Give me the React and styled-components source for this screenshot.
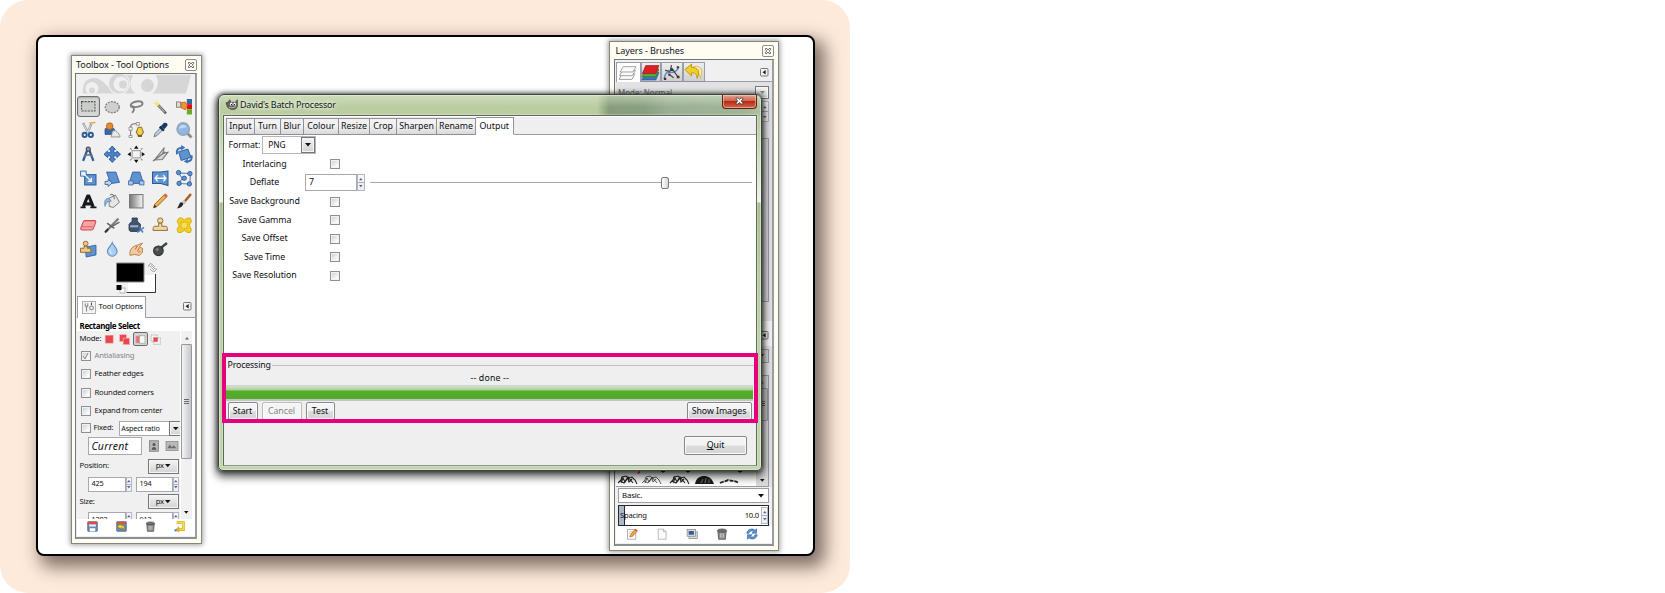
import React from "react";
import styled, { createGlobalStyle, css } from "styled-components";

const GlobalStyle = createGlobalStyle`
  *, *::before, *::after { box-sizing: border-box; }
  html, body { margin: 0; background: #fff; }
  body { font-family: "Noto Sans", "Open Sans", sans-serif; font-size: 8.8px; line-height: 1; color: #0c0c14; overflow: hidden; }
  svg { display: block; flex: none; overflow: visible; }
`;

const Page = styled.main`
  width: 850px; height: 593px; padding: 35px 0 0 36px;
  border-radius: 28px; background: #fdeadb;
`;
const Desktop = styled.section`
  position: relative; width: 779px; height: 521px;
  border: 2px solid #000; border-radius: 8px; background: #fff;
  box-shadow: 7px 8px 17px 3px rgba(45, 30, 25, 0.6);
`;

const Win = styled.section`
  position: absolute; left: ${p => p.$x}px; top: ${p => p.$y}px;
  width: ${p => p.$w}px; height: ${p => p.$h}px;
  display: flex; flex-direction: column;
`;
const Dock = styled(Win)`
  border: 1px solid #85857f; background: #fffdf2; padding: 0 4px 4px ${p => p.$inset ?? 4}px;
  box-shadow: 0 0 5px 1px rgba(0, 0, 0, 0.38);
`;
const DockTitle = styled.header`
  height: 17px; flex: none; padding: 0 0 0 1.5px;
  display: flex; align-items: center; justify-content: space-between;
  font-size: 9.1px; color: #14142a; letter-spacing: -0.1px;
`;
const CloseBox = styled.span`
  width: 12px; height: 12px; display: grid; place-items: center;
  border: 1px solid #8c8c88; border-radius: 2px; background: #fffef8;
`;
const DockBody = styled.div`
  flex: 1; min-height: 0; display: flex; flex-direction: column; overflow: hidden;
  border: 1px solid #70747c; border-right: 2px solid #9a9da4; border-bottom: 2px solid #8b8e94;
  background: #f0f0f0; padding: 0 0 1px 1px;
`;
const ToolGrid = styled.div`
  display: grid; grid-template-columns: repeat(5, 24px); grid-auto-rows: 23.7px; flex: none;
`;
const ToolCell = styled.span`
  display: grid; place-items: center;
  ${p => p.$on && css`
    margin: 1px 0.5px 1.5px 0.5px; border: 1.5px solid #6f6f6f; border-radius: 3px;
    background: #d6d6d6; box-shadow: inset 0 1px 2px #a8a8a8;
  `}
`;
const Swatches = styled.div`height: 35px; flex: none; padding: 0.5px 0 0 37px;`;
const TabStrip = styled.div`
  height: ${p => p.$h}px; flex: none; display: flex; align-items: stretch;
`;
const DockTab = styled.div`
  width: ${p => p.$w}px; flex: none; display: flex; align-items: center; gap: 3px; padding-left: ${p => p.$pad ?? 5}px;
  border: 1px solid #9a9da8; border-bottom: ${p => (p.$on ? "0" : "1px solid #8f929c")};
  background: ${p => (p.$on ? "#fff" : "linear-gradient(#ededed, #cfcfcf)")};
  white-space: nowrap; font-size: 7.8px; letter-spacing: -0.15px;
`;
const TabIcon = styled.span`
  width: 14px; height: 13px; display: grid; place-items: center; border: 1px solid #b0b0b0; background: #f3f3f3;
`;
const TabFill = styled.div`
  flex: 1; display: flex; justify-content: flex-end; align-items: center; padding-right: ${p => p.$pr}px;
  border-bottom: 1px solid #9a9da8; background: ${p => p.$bg || "transparent"};
`;
const Strip = styled.div`
  height: ${p => p.$h}px; flex: none; display: flex; align-items: center; padding: 2px 0 0 3px;
  background: #fff; font-weight: 700; font-size: 8px; letter-spacing: -0.35px; color: #000; white-space: nowrap;
`;
const Options = styled.div`height: 188px; flex: none; display: flex; background: #fff;`;
const OptionList = styled.div`
  width: 103px; height: 188px; overflow: hidden; background: #f0f0f0; padding-left: 3px;
  font-size: 7.7px; color: #141418; letter-spacing: -0.2px;
`;
const Line = styled.div`
  height: ${p => p.$h}px; display: flex; align-items: center; white-space: nowrap;
  gap: ${p => p.$gap || 0}px; padding-left: ${p => p.$pl || 0}px;
  color: ${p => (p.$off ? "#85858a" : "inherit")};
`;
const Grow = styled.span`flex: 1;`;
const Check = styled.span`
  width: 10px; height: 10px; flex: none; display: grid; place-items: center;
  border: 1px solid #8e9094; background: linear-gradient(135deg, #c6c8cc, #fff 80%);
  box-shadow: inset 0 0 0 1px #f2f2f2;
`;
const ModeButton = styled.span`
  width: 15.5px; height: 14px; display: grid; place-items: center; border-radius: 2px;
  border: 1px solid ${p => (p.$on ? "#6b6b6b" : "transparent")}; background: ${p => (p.$on ? "#d4d4d4" : "transparent")};
`;
const Field = styled.span`
  width: ${p => p.$w}px; height: ${p => p.$h}px; flex: none; display: flex; align-items: center; padding-left: ${p => p.$pl ?? 3}px;
  border: 1px solid #a7a9b0; background: #fff; white-space: nowrap;
  font-size: ${p => p.$fs || 7.3}px; font-style: ${p => (p.$italic ? "italic" : "normal")}; color: #111;
  letter-spacing: ${p => (p.$italic ? 0.2 : -0.2)}px;
`;
const SmallButton = styled.span`
  width: ${p => p.$w}px; height: ${p => p.$h}px; flex: none; display: flex; align-items: center; justify-content: center; gap: 1px;
  border: 1px solid #74767a; background: linear-gradient(#f4f4f4, #d2d2d2); box-shadow: inset 0 0 0 1px #f6f6f6;
`;
const SpinBox = styled.span`
  width: ${p => p.$w || 6}px; height: ${p => p.$h}px; flex: none; display: flex; flex-direction: column; justify-content: space-around; align-items: center;
  border: 1px solid #b5b7be; background: linear-gradient(#f7f7fa 46%, #a9abb2 47%, #a9abb2 53%, #f0f0f4 54%);
`;
const Scroll = styled.div`
  width: 11px; margin-left: 1.5px; height: 188px; display: flex; flex-direction: column; align-items: center; background: #f1f1f1;
`;
const Thumb = styled.span`
  width: 11px; height: ${p => p.$h}px; display: grid; place-items: center; border: 1px solid #96989d; border-radius: 1px;
  background: linear-gradient(90deg, #f5f5f5, #c5c6c9);
`;
const IconBar = styled.div`
  flex: 1; display: flex; align-items: center; justify-content: space-between; padding: 0 ${p => p.$p}px ${p => p.$pb ?? 4}px ${p => p.$pl}px; background: #fff;
`;

/* Batch processor dialog */
const DialogFrame = styled(Win)`
  border: 1.5px solid #3c4438; border-radius: 6px 6px 5px 5px; padding: 0 4px 4px 4px;
  background:
    linear-gradient(rgba(225, 235, 210, 0.55), transparent 12px) 0 0 / 100% 21px no-repeat,
    linear-gradient(90deg, transparent 378px, rgba(120, 140, 110, 0.75) 390px, rgba(118, 145, 118, 0.75) 425px, rgba(145, 165, 145, 0.75) 450px, rgba(140, 165, 145, 0.6) 525px, rgba(150, 175, 150, 0.3)) 0 0 / 100% 21px no-repeat,
    linear-gradient(#b9cc9f 0, #bccfa4 32px, #edf3e7 107px, #a9be8b 108px, #b9cfa4 200px, #c1d5ac 100%);
  box-shadow: 0 4px 9px 2px rgba(0, 0, 0, 0.62), 0 0 4px 1px rgba(0, 0, 0, 0.55), inset 0 0 0 1px rgba(255, 255, 255, 0.4);
`;
const DialogTitle = styled.header`
  height: 20px; flex: none; display: flex; padding: 0 0 0 2.5px; justify-content: space-between;
`;
const Caption = styled.span`
  display: flex; align-items: center; gap: 2.5px; font-size: 9px; letter-spacing: -0.2px; color: #101a14; white-space: nowrap;
  text-shadow: 0 0 5px #fff, 0 0 5px #fff;
`;
const RedClose = styled.span`
  width: 35px; height: 14px; display: grid; place-items: center; border: 1px solid #5b2019; border-top: 0; border-radius: 0 0 4px 4px;
  background: linear-gradient(#e5a394, #cf6550 45%, #b62c12 50%, #d6654a); box-shadow: inset 0 0 0 1px rgba(255, 220, 210, 0.5);
`;
const DialogBody = styled.div`
  flex: 1; min-height: 0; display: flex; flex-direction: column; background: #efefef; letter-spacing: -0.07px;
  border: 1px solid #5f685c; border-bottom-color: #8a9186; outline: 1px solid rgba(255, 255, 255, 0.25);
`;
const Tabs = styled.nav`
  height: 19px; flex: none; display: flex; align-items: flex-end; padding-left: 2px; border-top: 1px solid #fff;
`;
const Tab = styled.span`
  width: ${p => p.$w}px; height: ${p => (p.$on ? 18 : 17)}px; flex: none; display: flex; align-items: center; justify-content: center;
  border: 1px solid #8e9199; border-left-width: ${p => (p.$first ? 1 : 0)}px; border-bottom-color: ${p => (p.$on ? "#fff" : "#8e9199")};
  background: ${p => (p.$on ? "#fff" : "linear-gradient(#f1f1f1 45%, #d9d9d9)")}; white-space: nowrap; letter-spacing: 0; padding-top: 1px;
`;
const TabRest = styled.span`flex: 1; height: 18px; border-bottom: 1px solid #9a9ca2;`;
const Pane = styled.div`height: 218px; flex: none; background: #fff; padding: 0.6px 2px 0 3px;`;
const FormRow = styled.div`
  height: ${p => p.$h}px; display: flex; align-items: center; white-space: nowrap;
`;
const FormLabel = styled.span`width: 75px; text-align: center; flex: none; margin-right: 1px;`;
const CheckHolder = styled.span`padding-left: 27px;`;
const Combo = styled.span`
  width: 53.5px; height: 18px; display: flex; justify-content: space-between; align-items: stretch; border: 1px solid #b4b6bc; background: #fff;
  margin-left: 2px; & > span:first-child { padding: 4px 0 0 5px; font-size: 8.4px; }
`;
const Slider = styled.span`
  flex: 1; height: 12px; margin: 0 2px 0 5px; display: flex; align-items: center;
  &::before { content: ""; height: 1px; width: 290.5px; background: #a8a8a8; }
  &::after { content: ""; height: 1px; flex: 1; background: #a8a8a8; }
`;
const SliderThumb = styled.span`
  width: 8px; height: 12px; border: 1px solid #777a7e; border-radius: 2px; background: linear-gradient(90deg, #fff, #d5d5d5);
`;
const Processing = styled.section`
  height: 70px; flex: none; margin: 0 -2px 0 -2px; border: 4px solid #e5007d; position: relative; background: #efefef;
  display: flex; flex-direction: column;
`;
const Legend = styled.div`
  height: 16px; flex: none; display: flex; align-items: center; padding: 1px 0 0 1.5px; gap: 1px; letter-spacing: -0.15px;
  &::after { content: ""; flex: 1; height: 1px; background: #bfc0c2; }
`;
const Status = styled.div`height: 12.5px; flex: none; display: grid; place-items: center; letter-spacing: 0.15px;`;
const Progress = styled.div`
  height: 16px; flex: none; border-top: 1px solid #d3d2d4; border-bottom: 2px solid #c5c2c8; margin-right: 1px;
  background: linear-gradient(#cfe3c8 0, #a9cf9c 4px, #54ab2a 5px, #52aa28 100%);
`;
const Buttons = styled.div`display: flex; gap: 4px; padding: 1px 2px 0 1.5px; height: 17.5px; flex: none; overflow: hidden;`;
const Button = styled.button`
  width: ${p => p.$w}px; height: ${p => p.$h || 18}px; padding: 0; font: inherit; color: inherit; white-space: nowrap; letter-spacing: inherit;
  border: 1px solid #85878b; border-radius: 2px; background: linear-gradient(#f4f4f4 45%, #dcdcdc 55%, #d4d4d4);
  box-shadow: inset 0 0 0 1px #fafafa;
  &:disabled { color: #858588; border-color: #b9babd; background: #f4f4f4; }
`;
const Footer = styled.footer`flex: 1; display: flex; justify-content: flex-end; padding: 13.5px 8.5px 0 0;`;

/* Layers dock */
const Zone = styled.div`
  height: ${p => p.$h}px; flex: none; display: flex; justify-content: ${p => p.$j || "flex-end"}; align-items: flex-start;
  padding: ${p => p.$p || "0"}; background: ${p => p.$bg || "#e2e2e4"}; overflow: hidden; white-space: nowrap;
`;
const ModeText = styled.span`font-size: 8px; color: #66666a;`;
const Bordered = styled.div`
  width: ${p => p.$w}px; height: ${p => p.$h}px; flex: none; border: 1px solid #9b9ca2; background: ${p => p.$bg || "#d8d8da"};
  display: flex; justify-content: ${p => p.$j || "flex-end"}; align-items: ${p => p.$a || "flex-start"};
`;
const BrushScroll = styled.div`
  width: 12px; height: 110px; display: flex; flex-direction: column; align-items: center; padding-top: 5px; gap: 4px; background: #dadadc;
`;
const BrushArea = styled.div`flex: 1; height: 110px; display: flex; align-items: flex-end; background: #fff;`;
const Basic = styled.div`
  height: 15px; flex: none; margin: 1px 3px 2px 2px; padding: 0 4px 0 3px; display: flex; align-items: center; justify-content: space-between;
  border: 1px solid #9b9ca2; background: #fff; font-size: 7.8px; letter-spacing: -0.15px;
`;
const Spacing = styled.div`
  height: 20.5px; flex: none; margin: 0 3px 0 2px; display: flex; align-items: center; justify-content: space-between; border: 1.5px solid #24282c;
  background: linear-gradient(90deg, #a9bac6 5px, #24282c 5px, #24282c 6px, #fff 6px); font-size: 7.6px; padding-left: 1px; letter-spacing: -0.2px;
  & > span:last-child { display: flex; align-items: center; gap: 2px; }
`;

const Tri = ({ up, left, s = 6, c = "#111" }) => (
  <svg width={s} height={s * 0.6} viewBox="0 0 10 6">
    <path d={left ? "M7-2v10L1 3z" : up ? "M0 6h10L5 0z" : "M0 0h10L5 6z"} fill={c} />
  </svg>
);
const Spin = ({ h, w, c = "#4f62a5" }) => (
  <SpinBox $h={h} $w={w}><Tri up s={3.6} c={c} /><Tri s={3.6} c={c} /></SpinBox>
);
const CloseGlyph = () => (
  <CloseBox>
    <svg width="6" height="6" viewBox="0 0 6 6"><path d="M.5.5h1.3L3 2 4.2.5h1.3v1.2L4.2 3l1.3 1.3v1.2H4.2L3 4 1.8 5.5H.5V4.3L1.8 3 .5 1.7z" fill="#fff" stroke="#444" strokeWidth=".8" /></svg>
  </CloseBox>
);
const MenuGlyph = () => (
  <svg width="8" height="8" viewBox="0 0 8 8"><rect x=".5" y=".5" width="7.5" height="7.5" rx="1" fill="#f4f4f4" stroke="#777" /><path d="M5.7 2v4.4L2.4 4.2z" fill="#222" /></svg>
);
const Grip = () => (
  <svg width="5" height="6" viewBox="0 0 5 6"><path d="M0 .5h5M0 2.5h5M0 4.5h5" stroke="#67696d" /></svg>
);

const B = "#5f93cf", D = "#2b5a9b";
const icons = {
  rect: <rect x="1.5" y="3.5" width="13" height="9" fill="#c9ccc9" stroke="#555" strokeDasharray="2 1" />,
  ellipse: <ellipse cx="8" cy="8" rx="6.8" ry="5.4" fill="#cdd0cd" stroke="#777" strokeWidth="1.1" strokeDasharray="2 1" />,
  lasso: <g fill="none" stroke="#7d807d" strokeWidth="1.8"><path d="M3.500 8C.5 5 6 2.200 10 2.200c5 0 5.500 3.500 1 5-3 1-7 1-6.500-1" /><path d="M3.500 7.500c3 1 3 3 .5 6" /></g>,
  wand: <g><path d="M6 6l7.500 8" stroke="#555" strokeWidth="2.400" /><path d="M6 6l6.500 7" stroke="#b9b9a8" strokeWidth="1" /><path d="M4.500 1l1 2.500L8 4.500l-2.500 1-1 2.500-1-2.500L1 4.500l2.500-1z" fill="#f6e96a" /></g>,
  bycolor: <g><path d="M10.500 0h5v5h-5z" fill="#3465a4" /><path d="M10.500 5h5v5h-5z" fill="#d11" /><path d="M10.500 10h5v5h-5z" fill="#63b022" /><path d="M.5 3h4v5h-4z" fill="#ddd" stroke="#888" /><path d="M5 3.500l4-.5 2 3-2 4.500-4-2z" fill="#f0913a" stroke="#c9620f" strokeWidth=".8" /></g>,
  scissors: <g fill="none"><path d="M3 1l4.500 9M11 2L7.500 10" stroke="#999c99" strokeWidth="2.200" /><path d="M3.500 2l4 8 3-7" stroke="#ececec" strokeWidth=".8" /><path d="M9 1c2 0 4-.5 6-.5" stroke="#e2a45c" strokeWidth="1.300" /><circle cx="4.500" cy="12.500" r="2" stroke={D} strokeWidth="1.900" /><circle cx="10.500" cy="12.500" r="2" stroke={D} strokeWidth="1.900" /></g>,
  fgselect: <g><path d="M1 12V7c0-2 9-2 9 0v5z" fill="#3568ad" stroke="#26436f" strokeWidth=".7" /><circle cx="5.500" cy="4" r="3.200" fill="#e88b2e" stroke="#a85a15" strokeWidth=".7" /><path d="M7 14.500l1-5c2-2.500 5-1 7.500 4v1z" fill="#e7e7e7" stroke="#888" strokeWidth=".8" /></g>,
  paths: <g fill="none"><path d="M2.500 14V5c0-3 2-3.500 7-3.500" stroke="#777" /><path d="M1 13h3v2H1zM1 5h3v3H1zM8 .5h3v2.500H8z" fill="#fff" stroke="#777" strokeWidth=".7" /><path d="M10 5h3l2 5-2 3h-3l-2-3z" fill="#f1d04a" stroke="#95711b" /><path d="M9.500 13.500h4" stroke="#6d5b20" strokeWidth="2" /></g>,
  picker: <g><path d="M2 14.500l1-3.500 6-6 2 2-6 6z" fill="#b9d2ec" stroke="#667" strokeWidth=".8" /><path d="M8.500 4l3-3c2-1 4 .5 3.500 2.500l-3 3.500z" fill="#173967" /><path d="M7.500 4.500l4 4" stroke="#14294a" strokeWidth="2.200" /></g>,
  zoom: <g><path d="M11 11l4 4" stroke="#8c8f8c" strokeWidth="2.800" /><circle cx="7" cy="6.800" r="6" fill="#8fb6e5" stroke="#98a3b0" strokeWidth="1.400" /><path d="M3 6.500a4 4 0 017.500-1.500z" fill="#c3daf5" /></g>,
  measure: <g fill="none"><path d="M7 4L3 14.500M9 4l4 10.500" stroke={D} strokeWidth="2.200" /><path d="M4 10c2-2 6-2 8 0" stroke="#777" strokeWidth="1.700" /><circle cx="8" cy="3" r="2" fill="#999" stroke="#445" /></g>,
  move: <path d="M8 0l3.200 3.500H9.500v3h3V4.800L16 8l-3.500 3.200V9.500h-3v3h1.700L8 16l-3.200-3.500h1.700v-3h-3v1.700L0 8l3.500-3.200v1.700h3v-3H4.800z" fill="#4c84c9" stroke={D} strokeWidth=".9" />,
  align: <g><rect x="4" y="4.500" width="8" height="7" fill="#f4f4f4" stroke="#999" /><path d="M8-.5l2.200 3.200H5.800zM8 16.500l2.200-3.200H5.800zM-.5 8l3.200-2.200v4.400zM16.500 8l-3.200-2.200v4.400z" fill="#111" /><path d="M2 2l1.500 1.500M14 2l-1.500 1.500M2 14l1.500-1.500M14 14l-1.500-1.500" stroke="#888" /></g>,
  crop: <g><path d="M2.500 13.500L12 1.500l-1.500 5.500 5-1-5.500 7z" fill="#d9dbd9" stroke="#777" /><path d="M1 14.500l12-9" stroke="#777" strokeWidth="1.300" /></g>,
  rotate: <g><path d="M2.500 5.500l9-2.500 3 8-9.500 3z" fill={B} stroke={D} strokeWidth=".9" /><path d="M1 8c-1-4 1-6.500 5-6M15 9c1 4-1 6-4 6" fill="none" stroke="#3b70b5" strokeWidth="2" /><path d="M5-1v5l4-2.500zM11.500 12v5l-4-2z" fill="#3b70b5" /></g>,
  scale: <g><rect x="4.500" y="4.500" width="11" height="10" fill={B} stroke={D} /><path d="M.5 1h5.500v5H.5z" fill="#dce8f5" stroke={D} strokeWidth=".8" /><path d="M3 3l8 8M11 7.500V11H7.500" stroke="#fff" strokeWidth="1.200" fill="none" /></g>,
  shear: <g><path d="M2.500 2h9l3.500 10-8 1-2-4z" fill={B} stroke={D} strokeWidth=".8" /><path d="M1 11h3V9l4 3.500L4 16v-2H1z" fill="#bfd6ef" stroke={D} strokeWidth=".8" /></g>,
  perspective: <g><path d="M4.500 2h7l3.500 11H1z" fill={B} stroke={D} strokeWidth=".8" /><path d="M.5 10.500h4.500v4H.5zM11 10.500h4.500v4H11z" fill="#a9c7ea" stroke={D} strokeWidth=".7" /></g>,
  flip: <g><path d="M.5 2h8l7-1v14l-7-2h-8z" fill={B} stroke={D} /><path d="M5.500 5L3 8l2.500 3M11 5l2.500 3-2.500 3M3 8h10" fill="none" stroke="#fff" strokeWidth="1.300" /></g>,
  cage: <g><path d="M2.500 3L14 3.500 13.500 13.500 3 13 6 8z" fill="none" stroke="#5b7ca6" />{[[2.5, 2.5], [13.5, 3.5], [8, 8], [3, 13], [13, 13.5]].map(([x, y], i) => <circle key={i} cx={x} cy={y} r="2.100" fill={B} stroke={D} strokeWidth=".9" />)}</g>,
  text: <g fill="none" stroke="#17191b" strokeLinejoin="round"><path d="M3.200 13.500L7.400 3h1.200l4.200 10.500M5 10.500h6" strokeWidth="3" /><path d="M.5 14h5M10 14h6" strokeWidth="1.600" /></g>,
  bucket: <g><path d="M5 5l6-3 4 7-6 5-4-1z" fill="#e5e7e5" stroke="#777" strokeWidth=".9" /><path d="M5 5c-4 0-5 3-4 8 1-4 3-5 6-5z" fill="#8fb3dc" stroke="#5e83ad" strokeWidth=".7" /><path d="M6 2c2-2 4 0 4 4" fill="none" stroke="#777" /></g>,
  blend: <g><defs><linearGradient id="bl"><stop offset="0" stopColor="#777" /><stop offset="1" stopColor="#f8f8f8" /></linearGradient></defs><rect x="1.500" y="1.500" width="13" height="13" fill="url(#bl)" stroke="#777" /></g>,
  pencil: <g><path d="M1.500 14.500l1-3.500L12 1.500c1.500-1 3 .5 2.500 2L5 13z" fill="#eab24d" stroke="#9b671c" strokeWidth=".9" /><path d="M1.500 14.500l1-3 2 1.500z" fill="#333" /><path d="M12 1.500c1.500-1 3 .5 2.500 2l-1 1-2.500-2z" fill="#d66" /></g>,
  brush: <g><path d="M14.500 1L7 10" stroke="#a85d23" strokeWidth="2.400" /><path d="M8.500 7.500l-2.500 3" stroke="#c8c8c8" strokeWidth="3" /><path d="M7 10c0 3-3 5-6.500 5 2.500-1 2-5.500 4.500-6z" fill="#242629" /></g>,
  eraser: <g><path d="M5 3.500h9c1.500 0 1.500 1 1 2.500l-2 5c-.5 1.500-1 1.500-2 1.500H2c-1.500 0-1.500-1-1-2.500l2-5c.5-1.200 1-1.500 2-1.500z" fill="#f5a3a3" stroke="#d3474e" /><path d="M1.500 9.500h11" stroke="#e0666b" /></g>,
  airbrush: <g><path d="M2 14L14 1.500" stroke="#7b7e82" strokeWidth="2.200" /><path d="M3 6l7 5M6 10l9-5" stroke="#62666b" strokeWidth="1.500" /><path d="M1 15l3-3.500" stroke="#333" strokeWidth="2" /></g>,
  ink: <g><path d="M4 1h5v3l3 3v5c0 1-1 2-2 2H3c-1 0-2-1-2-2V7l3-3z" fill="#41556e" stroke="#27313e" strokeWidth=".8" /><path d="M2 8h8v2H2z" fill="#9eb3c9" /><path d="M9 15l6.500-5M11 10l3.500 5" stroke="#4c82c2" strokeWidth="1.500" /></g>,
  stamp: <g fill="#eed6a8" stroke="#93642a" strokeWidth=".9"><circle cx="8" cy="3.500" r="2.600" /><path d="M6.500 6h3v3h4c1 0 1.500 1 1.500 4H1c0-3 .5-4 1.500-4h4z" /></g>,
  heal: <g><path d="M3 1h3l2 2 3-2h3l1 3-2 4 2 4-1 3h-3l-3-2-3 2H2L1 12l2-4-2-4z" fill="#efcf22" stroke="#d2a60b" strokeWidth=".8" /><path d="M5 5h6v6H5z" fill="#f7df57" strokeDasharray="1 1" stroke="#c49c12" /></g>,
  pclone: <g><path d="M5 6l10.500-2v9.500L6 15.500z" fill={B} stroke={D} strokeWidth=".8" /><circle cx="5.500" cy="2.500" r="2.300" fill="#eac98c" stroke="#93642a" strokeWidth=".9" /><path d="M4 5h3v2h3.500v4H.5V7H4z" fill="#eac98c" stroke="#93642a" strokeWidth=".9" /></g>,
  blur: <g><path d="M8 1.500c1 3 4.700 5 4.700 8.500a4.700 4.700 0 01-9.400 0C3.300 6.500 7 4.500 8 1.500z" fill="#a9cdf3" stroke="#5f87b6" /><path d="M6 8c-1 3 1 4 2 4" fill="none" stroke="#e4f1fd" /></g>,
  smudge: <g><path d="M2 14c-1-4 1-7 4-9l3-1 5-2-3 4 3 1v4l-3 3-5-1z" fill="#f3c9a4" stroke="#bb7941" strokeWidth=".9" /><path d="M9 5l-2 3M11 7l-2 3M12 10l-2 1" stroke="#bb7941" /></g>,
  dodge: <g><path d="M7 8l7.500-6" stroke="#44474a" strokeWidth="2.400" /><circle cx="6.200" cy="9.500" r="4.700" fill="#4a4d50" stroke="#2e3134" /><circle cx="5" cy="8.300" r="1.500" fill="#7b7e81" /></g>,
  mode1: <rect x="2" y="2" width="12" height="12" fill="#e8484d" stroke="#f3a0a2" strokeDasharray="2 1" />,
  mode2: <g fill="#e8484d" stroke="#f5b0b2"><rect x="1" y="1" width="10" height="10" /><rect x="6" y="6" width="9.500" height="9.500" /></g>,
  mode3: <g><rect x="1.500" y="3" width="10" height="10" fill="#ed7276" stroke="#c99" /><rect x="6.500" y="2.500" width="8" height="11" fill="#f6f6f6" stroke="#888" strokeDasharray="2 1" /></g>,
  mode4: <g fill="#f4f4f4" stroke="#999" strokeDasharray="2 1"><rect x="1.500" y="1.500" width="9" height="9" /><rect x="5.500" y="5.500" width="9.500" height="9.500" /><rect x="5.500" y="5.500" width="5.500" height="5.500" fill="#e8484d" stroke="#e8484d" /></g>,
  tools: <g fill="none" stroke="#888" strokeWidth="1.700"><path d="M2 2v4l2 2 2-2V2M4 8v7" /><circle cx="12" cy="9.500" r="3" /><path d="M12 1v4" stroke="#444" /></g>,
  save: <g><rect x="1" y="1" width="14" height="14" rx="1" fill="#6788b5" stroke="#3d5c88" /><path d="M1 1h14v4H1z" fill="#d8503f" /><path d="M4 10.500h8V15H4z" fill="#fff" /><path d="M3 5h10v3H3z" fill="#eef" /></g>,
  restore: <g><rect x="1" y="1" width="14" height="14" rx="1" fill="#6788b5" stroke="#3d5c88" /><path d="M1 1h14v3H1z" fill="#d8503f" /><path d="M2 8l5-4.500V6c5 0 6 3 6 7-2-2-3-3-6-3v2.500z" fill="#f5d532" stroke="#8f7410" /></g>,
  trash: <g><path d="M2.500 4h11l-1 11h-9z" fill="#8a8c89" stroke="#4a4c49" /><ellipse cx="8" cy="3.500" rx="6" ry="2.200" fill="#6f716e" stroke="#4a4c49" /><path d="M6 7v6M8 7v6M10 7v6" stroke="#ccc" /></g>,
  reset: <g fill="none"><path d="M4 2.500h9.500v10H6" stroke="#c39c11" strokeWidth="4" /><path d="M4 2.500h9.500v10H6" stroke="#f8dc4d" strokeWidth="2.600" /><path d="M2.500 12.500l4.500-4v7.500z" fill="#eec327" stroke="#b08a0c" strokeWidth=".8" /><circle cx="2.500" cy="13.500" r="2" fill={B} /></g>,
  layers: <g fill="#fafafa" stroke="#9c9f9c" strokeWidth=".9"><path d="M3 9.500h12l-3 5H0z" /><path d="M3.500 6h12l-3 5H.5z" /><path d="M4 2.500h12l-3 5H1z" /></g>,
  channels: <g strokeWidth=".6"><path d="M3 8h13l-3 7H0z" fill="#3d75c7" stroke="#234f91" /><path d="M3 5h13l-3 7H0z" fill="#58ad2b" stroke="#33721a" /><path d="M3.500 1.500H16l-3 7.500H.3z" fill="#dc2027" stroke="#93131a" /></g>,
  curve: <g fill="none" stroke="#393e45"><path d="M1 14.500C3 1 9 14 15 3" stroke="#5785bf" strokeWidth="1.300" /><path d="M2 6l5 1M9 5l5 7M6 10l4 3M8 1l-1 5" strokeWidth="1.100" /><path d="M7 4h2.500v2.500H7zM1 13h2v2H1zM13 11h2.500v2.500H13zM5 9h2v2H5zM13 2h2v2h-2z" fill="#333" stroke="none" /></g>,
  undo: <g><path d="M8 3c7-1 9 4 6 11 0-4-2-6-6-6z" fill="#f8eb9b" stroke="#d5bd4b" strokeWidth=".8" /><path d="M0 6l6-5v3c6 0 8 4 5 10 0-4-2-5-5-5v3z" fill="#f2ce2d" stroke="#ba9415" strokeWidth=".9" /></g>,
  edit: <g><path d="M2 2h11v13H2z" fill="#fff" stroke="#999" /><path d="M4 5h6M4 7h5" stroke="#bbb" /><path d="M5 12l1-3 6-7 3 2-6 7z" fill="#f0a43b" stroke="#a86619" strokeWidth=".8" /><path d="M12 2l3 2" stroke="#d44" strokeWidth="2" /></g>,
  page: <path d="M3 1.500h7L13.500 5v10H3zM10 1.500V5h3.500" fill="#fcfcfc" stroke="#a5a7a5" />,
  copy: <g><rect x="4" y="5" width="11" height="9" fill="#ddd" stroke="#888" /><rect x="1.500" y="2" width="11" height="9" fill="#ddd" stroke="#888" /><rect x="3.500" y="4" width="7" height="5" fill="#365b93" /></g>,
  refresh: <g fill={B} stroke={D} strokeWidth=".8"><path d="M1 7c1-6 8-7 11-4l2-2v6H8l2-2c-2-2-5-1-6 2z" /><path d="M15 9c-1 6-8 7-11 4l-2 2V9h6l-2 2c2 2 5 1 6-2z" /></g>,
  portrait: <g><rect x="2" y="1" width="12" height="14" fill="#b4b4b4" stroke="#777" /><path d="M5 13c0-5 6-5 6 0z" fill="#555" /><circle cx="8" cy="6" r="2" fill="#555" /></g>,
  landscape: <g><rect x="0" y="2" width="16" height="12" fill="#b9b9b9" stroke="#888" /><path d="M2 11l3-5 3 4 2-3 4 4z" fill="#6a6a6a" /></g>,
  wilber: <g><path d="M0 5l3-1 2-3 2 4c2-1 3-1 5 0l3-4c1 7 1 13-6 13-4 0-5-2-7-3z" fill="#5f615c" stroke="#32342f" strokeWidth=".8" /><ellipse cx="7" cy="7" rx="1.800" ry="2.200" fill="#fff" /><ellipse cx="11.500" cy="7" rx="1.800" ry="2.200" fill="#fff" /><circle cx="7.300" cy="7.500" r="1" /><circle cx="11.200" cy="7.500" r="1" /><path d="M4 11c3 1 6 1 9-1" stroke="#ddd" fill="none" /></g>,
};
const Icon = ({ n, s = 16 }) => <svg width={s} height={s} viewBox="0 0 16 16">{icons[n]}</svg>;

const toolNames = "rect ellipse lasso wand bycolor scissors fgselect paths picker zoom measure move align crop rotate scale shear perspective flip cage text bucket blend pencil brush eraser airbrush ink stamp heal pclone blur smudge dodge".split(" ");

const WilberBanner = () => (
  <svg width="119" height="21" viewBox="0 0 119 21">
    <path d="M6 19.500C5 9 10 4 17 4c8 0 11 7 17 11V1h80l-5 18.500z" fill="#d6d6d6" />
    <path d="M25 0h10v12c-5-2-7-7-10-9z" fill="#f0f0f0" />
    <circle cx="15" cy="14.500" r="6.500" fill="#f0f0f0" /><circle cx="15" cy="16.500" r="3" fill="#d6d6d6" />
    <circle cx="42" cy="9.500" r="11" fill="#f0f0f0" /><circle cx="42" cy="9.500" r="10" fill="#d6d6d6" /><circle cx="44" cy="10" r="7.500" fill="#f0f0f0" /><circle cx="46" cy="10.500" r="4" fill="#d6d6d6" />
    <path d="M57 0h21c5 7 3 15-3 20H59C52 15 52 7 57 0z" fill="#f0f0f0" /><circle cx="70.500" cy="11.500" r="6.500" fill="#d6d6d6" />
  </svg>
);

const checks = [["Feather edges", 18], ["Rounded corners", 18.5], ["Expand from center", 18]];

const Toolbox = () => (
  <Dock $x={32.5} $y={18} $w={131.5} $h={489} $inset={3}>
    <DockTitle>Toolbox - Tool Options<CloseGlyph /></DockTitle>
    <DockBody>
      <WilberBanner />
      <ToolGrid>{toolNames.map((n, i) => <ToolCell key={n} $on={i === 0}><Icon n={n} s={16.5} /></ToolCell>)}</ToolGrid>
      <Swatches>
        <svg width="50" height="34" viewBox="0 0 50 34">
          <path d="M14 14h27v17H14z" fill="#fff" /><path d="M12.500 31.500h29V13" fill="none" stroke="#333" />
          <path d="M2.500 2h27.500v19h-27.500z" fill="#000" stroke="#8a8a8a" />
          <path d="M6 27h5v5H6z" fill="#fff" stroke="#999" strokeWidth=".7" /><path d="M2.500 24h5v5h-5z" fill="#000" />
          <path d="M34 5l3-3v2l4 4h2l-3 3v-2l-4-4zM38 3l3 3M36 8l3 3" fill="#fff" stroke="#999" strokeWidth=".8" />
        </svg>
      </Swatches>
      <TabStrip $h={22}>
        <DockTab $w={69} $on $pad={4}><TabIcon><Icon n="tools" s={10} /></TabIcon>Tool Options</DockTab>
        <TabFill $pr={4}><MenuGlyph /></TabFill>
      </TabStrip>
      <Strip $h={13.5}>Rectangle Select</Strip>
      <Options>
        <OptionList>
          <Line $h={15.5}>Mode:<Grow /><ModeButton><Icon n="mode1" s={10.5} /></ModeButton><ModeButton><Icon n="mode2" s={11} /></ModeButton><ModeButton $on><Icon n="mode3" s={11} /></ModeButton><ModeButton><Icon n="mode4" s={11} /></ModeButton><Line $pl={16} /></Line>
          <Line $h={18.5} $gap={4} $pl={1} $off><Check><svg width="7" height="7" viewBox="0 0 7 7"><path d="M1 3l2 3 3-6" fill="none" stroke="#888" /></svg></Check>Antialiasing</Line>
          {checks.map(([t, h]) => <Line key={t} $h={h} $gap={4} $pl={1}><Check />{t}</Line>)}
          <Line $h={17} $gap={3} $pl={1}><Check />Fixed:<Grow /><Field $w={64.5} $h={15} $pl={1}>Aspect ratio<Grow /><SmallButton $w={14} $h={15}><Tri s={5.5} /></SmallButton></Field></Line>
          <Line $h={18.5} $gap={6} $pl={8}><Field $w={54} $h={17.5} $fs={10.5} $italic>Current</Field><Icon n="portrait" s={12} /><Icon n="landscape" s={12} /></Line>
          <Line $h={21.5}>Position:<Grow /><SmallButton $w={31} $h={15}>px<Tri s={5.5} /></SmallButton><Line $pl={1} /></Line>
          <Line $h={14.5} $pl={8}><Field $w={38} $h={15}>425</Field><Spin h={15} /><Line $pl={4} /><Field $w={37} $h={15}>194</Field><Spin h={15} /></Line>
          <Line $h={20.5}>Size:<Grow /><SmallButton $w={31} $h={15}>px<Tri s={5.5} /></SmallButton><Line $pl={1} /></Line>
          <Line $h={15} $pl={8}><Field $w={38} $h={15}>1202</Field><Spin h={15} /><Line $pl={4} /><Field $w={37} $h={15}>912</Field><Spin h={15} /></Line>
        </OptionList>
        <Scroll><Line $h={13}><Tri up s={4} c="#666" /></Line><Thumb $h={115}><Grip /></Thumb><Grow /><Line $h={14}><Tri s={4.5} /></Line></Scroll>
      </Options>
      <IconBar $p={10} $pl={10} $pb={1.5}><Icon n="save" s={11} /><Icon n="restore" s={11} /><Icon n="trash" s={11} /><Icon n="reset" s={11} /></IconBar>
    </DockBody>
  </Dock>
);

const Brushes = () => (
  <svg width="137" height="17" viewBox="0 0 137 17">
    <path d="M24 4.500v-3.500l-3.500 3.500z" fill="#e55" />
    <path d="M47 0v4M45 2.500h4M72 0v4M70 2.500h4M124 0v4M122 2.500h4" stroke="#222" />
    {[2, 26, 54].map((x, i) => <path key={x} d={`M${x} 14l3-3 1-3 4-1 2 2 4-1 3 3 2 4M${x + 3} 14l2-5 2 4 3-4 1 4 3-3M${x + 2} 12l4 2 4-6 5 6`} fill="none" stroke="#222" strokeWidth={i === 1 ? 0.7 : 1.1} />)}
    <path d="M79 15c1-6 5-8 9-8s8 2 10 8z" fill="#1b1b1b" /><path d="M89 14l1-5M85 14l2-4M93 14v-4" stroke="#999" strokeWidth=".7" />
    <path d="M104 14c3-2 5-1 8-3 5 1 7 1 11 3" fill="none" stroke="#222" strokeWidth="1.800" strokeDasharray="4 1" />
  </svg>
);

const Layers = () => (
  <Dock $x={571} $y={4.4} $w={170} $h={510}>
    <DockTitle>Layers - Brushes<CloseGlyph /></DockTitle>
    <DockBody>
      <Zone $h={1.5} $bg="#f0f0f0" />
      <TabStrip $h={20.5}>
        <DockTab $w={24.5} $on $pad={2}><Icon n="layers" s={17} /></DockTab>
        <DockTab $w={20.5} $pad={0}><Icon n="channels" s={17} /></DockTab>
        <DockTab $w={21.5} $pad={1}><Icon n="curve" s={17} /></DockTab>
        <DockTab $w={22.5} $pad={1}><Icon n="undo" s={17.5} /></DockTab>
        <TabFill $pr={4}><MenuGlyph /></TabFill>
      </TabStrip>
      <Zone $h={17} $j="space-between" $p="4px 3px 0 2px"><Line $h={13}><ModeText>Mode: Normal</ModeText></Line><SmallButton $w={14} $h={13}><Tri s={5} c="#888" /></SmallButton></Zone>
      <Zone $h={39} $p="2px 3px 0 0"><Spin h={21} w={8} c="#666" /></Zone>
      <Zone $h={165} $p="0 3px 0 0"><Bordered $w={150} $h={164} /></Zone>
      <Zone $h={17.5} $p="4px 9px 0 0"><svg width="5" height="8" viewBox="0 0 5 8"><rect x="1" width="3" height="8" rx="1" fill="#444" /></svg></Zone>
      <Zone $h={25} $bg="#f5f5f5" $p="10px 4px 0 0"><MenuGlyph /></Zone>
      <Zone $h={29.5} $p="3px 3px 0 0"><Bordered $w={150} $h={14} $a="center"><Tri s={5} /><Line $pl={4} /></Bordered></Zone>
      <Zone $h={112} $p="0 3px 0 2px"><Bordered $w={154} $h={112} $bg="#fff" $a="stretch">
        <BrushArea><Brushes /></BrushArea>
        <BrushScroll><Tri up s={4} c="#666" /><Thumb $h={33}><Grip /></Thumb><Grow /><Line $h={12}><Tri s={4.5} /></Line></BrushScroll>
      </Bordered></Zone>
      <Basic>Basic.<Tri s={6} /></Basic>
      <Spacing><span>Spacing</span><span>10.0<Spin h={17} w={7} /></span></Spacing>
      <IconBar $p={14} $pl={10} $pb={2}><Icon n="edit" s={12} /><Icon n="page" s={12} /><Icon n="copy" s={12} /><Icon n="trash" s={12} /><Icon n="refresh" s={12} /></IconBar>
    </DockBody>
  </Dock>
);

const dialogTabs = [["Input", 29], ["Turn", 26], ["Blur", 23], ["Colour", 35], ["Resize", 31], ["Crop", 27], ["Sharpen", 40], ["Rename", 39], ["Output", 37.5]];
const toggles = [["Save Background", 19], ["Save Gamma", 18], ["Save Offset", 19], ["Save Time", 18], ["Save Resolution", 19]];

const BatchDialog = () => (
  <DialogFrame $x={180} $y={56.5} $w={543.5} $h={377.5}>
    <DialogTitle>
      <Caption><Icon n="wilber" s={12} />David's Batch Processor</Caption>
      <RedClose><svg width="9" height="8" viewBox="0 0 9 8"><path d="M1 1h2l1.500 1.500L6 1h2v1L6.200 4 8 6v1H6L4.500 5.500 3 7H1V6l1.800-2L1 2z" fill="#fff" stroke="#444" strokeWidth=".8" /></svg></RedClose>
    </DialogTitle>
    <DialogBody>
      <Tabs>
        {dialogTabs.map(([t, w], i) => <Tab key={t} $w={w} $first={i === 0} $on={t === "Output"}>{t}</Tab>)}
        <TabRest />
      </Tabs>
      <Pane>
        <FormRow $h={20}><Line $pl={1.5}>Format:</Line><Combo><span>PNG</span><SmallButton $w={14} $h={16}><Tri s={6} /></SmallButton></Combo></FormRow>
        <FormRow $h={18}><FormLabel>Interlacing</FormLabel><CheckHolder><Check /></CheckHolder></FormRow>
        <FormRow $h={19}><FormLabel>Deflate</FormLabel><Line $pl={2} /><Field $w={52} $h={17} $fs={8.8}>7</Field><Spin h={17} w={8} /><Slider><SliderThumb /></Slider></FormRow>
        {toggles.map(([t, h]) => <FormRow key={t} $h={h}><FormLabel>{t}</FormLabel><CheckHolder><Check /></CheckHolder></FormRow>)}
      </Pane>
      <Processing>
        <Legend>Processing</Legend>
        <Status>-- done --</Status>
        <Progress />
        <Buttons><Button $w={30}>Start</Button><Button $w={40} disabled>Cancel</Button><Button $w={29}>Test</Button><Grow /><Button $w={65}>Show Images</Button></Buttons>
      </Processing>
      <Footer><Button $w={63} $h={19}><u>Q</u>uit</Button></Footer>
    </DialogBody>
  </DialogFrame>
);

export default function App() {
  return (
    <>
      <GlobalStyle />
      <Page>
        <Desktop>
          <Toolbox />
          <Layers />
          <BatchDialog />
        </Desktop>
      </Page>
    </>
  );
}
